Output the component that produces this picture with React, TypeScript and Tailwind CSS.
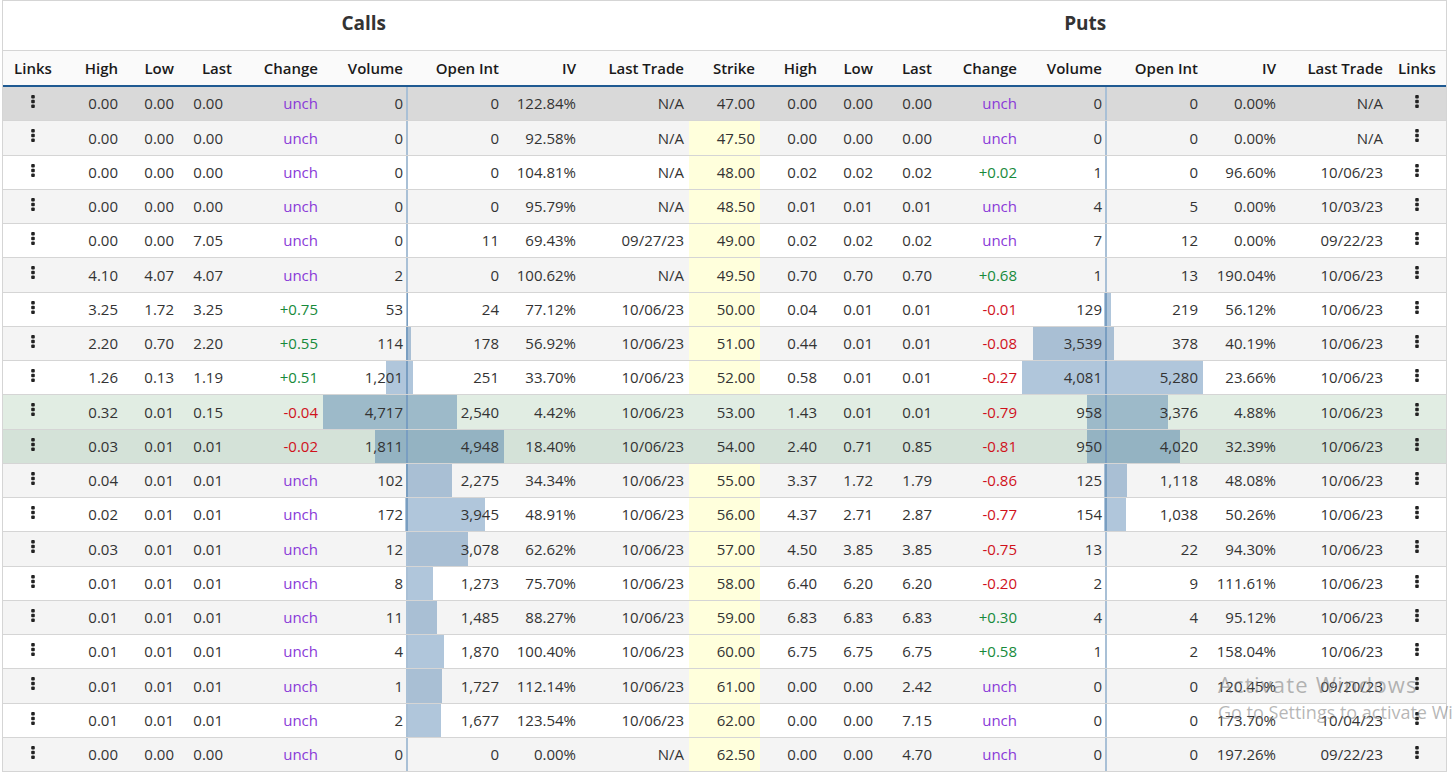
import React from "react";

type Side = [string, string, string, string, number, number, string, string];
type Row = { strike: string; c: Side; p: Side };

const rows: Row[] = [
  { strike: "47.00", c: ["0.00", "0.00", "0.00", "unch", 0, 0, "122.84%", "N/A"], p: ["0.00", "0.00", "0.00", "unch", 0, 0, "0.00%", "N/A"] },
  { strike: "47.50", c: ["0.00", "0.00", "0.00", "unch", 0, 0, "92.58%", "N/A"], p: ["0.00", "0.00", "0.00", "unch", 0, 0, "0.00%", "N/A"] },
  { strike: "48.00", c: ["0.00", "0.00", "0.00", "unch", 0, 0, "104.81%", "N/A"], p: ["0.02", "0.02", "0.02", "+0.02", 1, 0, "96.60%", "10/06/23"] },
  { strike: "48.50", c: ["0.00", "0.00", "0.00", "unch", 0, 0, "95.79%", "N/A"], p: ["0.01", "0.01", "0.01", "unch", 4, 5, "0.00%", "10/03/23"] },
  { strike: "49.00", c: ["0.00", "0.00", "7.05", "unch", 0, 11, "69.43%", "09/27/23"], p: ["0.02", "0.02", "0.02", "unch", 7, 12, "0.00%", "09/22/23"] },
  { strike: "49.50", c: ["4.10", "4.07", "4.07", "unch", 2, 0, "100.62%", "N/A"], p: ["0.70", "0.70", "0.70", "+0.68", 1, 13, "190.04%", "10/06/23"] },
  { strike: "50.00", c: ["3.25", "1.72", "3.25", "+0.75", 53, 24, "77.12%", "10/06/23"], p: ["0.04", "0.01", "0.01", "-0.01", 129, 219, "56.12%", "10/06/23"] },
  { strike: "51.00", c: ["2.20", "0.70", "2.20", "+0.55", 114, 178, "56.92%", "10/06/23"], p: ["0.44", "0.01", "0.01", "-0.08", 3539, 378, "40.19%", "10/06/23"] },
  { strike: "52.00", c: ["1.26", "0.13", "1.19", "+0.51", 1201, 251, "33.70%", "10/06/23"], p: ["0.58", "0.01", "0.01", "-0.27", 4081, 5280, "23.66%", "10/06/23"] },
  { strike: "53.00", c: ["0.32", "0.01", "0.15", "-0.04", 4717, 2540, "4.42%", "10/06/23"], p: ["1.43", "0.01", "0.01", "-0.79", 958, 3376, "4.88%", "10/06/23"] },
  { strike: "54.00", c: ["0.03", "0.01", "0.01", "-0.02", 1811, 4948, "18.40%", "10/06/23"], p: ["2.40", "0.71", "0.85", "-0.81", 950, 4020, "32.39%", "10/06/23"] },
  { strike: "55.00", c: ["0.04", "0.01", "0.01", "unch", 102, 2275, "34.34%", "10/06/23"], p: ["3.37", "1.72", "1.79", "-0.86", 125, 1118, "48.08%", "10/06/23"] },
  { strike: "56.00", c: ["0.02", "0.01", "0.01", "unch", 172, 3945, "48.91%", "10/06/23"], p: ["4.37", "2.71", "2.87", "-0.77", 154, 1038, "50.26%", "10/06/23"] },
  { strike: "57.00", c: ["0.03", "0.01", "0.01", "unch", 12, 3078, "62.62%", "10/06/23"], p: ["4.50", "3.85", "3.85", "-0.75", 13, 22, "94.30%", "10/06/23"] },
  { strike: "58.00", c: ["0.01", "0.01", "0.01", "unch", 8, 1273, "75.70%", "10/06/23"], p: ["6.40", "6.20", "6.20", "-0.20", 2, 9, "111.61%", "10/06/23"] },
  { strike: "59.00", c: ["0.01", "0.01", "0.01", "unch", 11, 1485, "88.27%", "10/06/23"], p: ["6.83", "6.83", "6.83", "+0.30", 4, 4, "95.12%", "10/06/23"] },
  { strike: "60.00", c: ["0.01", "0.01", "0.01", "unch", 4, 1870, "100.40%", "10/06/23"], p: ["6.75", "6.75", "6.75", "+0.58", 1, 2, "158.04%", "10/06/23"] },
  { strike: "61.00", c: ["0.01", "0.01", "0.01", "unch", 1, 1727, "112.14%", "10/06/23"], p: ["0.00", "0.00", "2.42", "unch", 0, 0, "120.45%", "09/20/23"] },
  { strike: "62.00", c: ["0.01", "0.01", "0.01", "unch", 2, 1677, "123.54%", "10/06/23"], p: ["0.00", "0.00", "7.15", "unch", 0, 0, "173.70%", "10/04/23"] },
  { strike: "62.50", c: ["0.00", "0.00", "0.00", "unch", 0, 0, "0.00%", "N/A"], p: ["0.00", "0.00", "4.70", "unch", 0, 0, "197.26%", "09/22/23"] },
];

const GRID =
  "grid grid-cols-[60px_60px_56px_58px_86px_85px_96px_77px_108px_71px_62px_56px_59px_85px_85px_96px_78px_107px_58px]";

const MAX = { cv: 4717, co: 4948, pv: 4081, po: 5280 };

const fmt = (n: number) => n.toLocaleString("en-US");

function changeClass(v: string) {
  if (v === "unch") return "text-[#8a3ad8]";
  if (v.startsWith("+")) return "text-[#178a3b]";
  return "text-[#d0111b]";
}

function Dots() {
  return (
    <svg width="4" height="13" viewBox="0 0 4 13" className="-mt-[4px]">
      <rect x="0.2" y="0" width="3.6" height="3.6" rx="1" fill="#222" />
      <rect x="0.2" y="4.7" width="3.6" height="3.6" rx="1" fill="#222" />
      <rect x="0.2" y="9.4" width="3.6" height="3.6" rx="1" fill="#222" />
    </svg>
  );
}

const cell = "flex items-center justify-end pr-[5px] whitespace-nowrap";

function rowBg(i: number) {
  if (i === 0) return "bg-[#d9d9d9]";
  if (i === 9) return "bg-[#e1ede3]";
  if (i === 10) return "bg-[#d4e2d8]";
  return i % 2 === 1 ? "bg-[#f4f4f4]" : "bg-white";
}

function VolCell({ v, max }: { v: number; max: number }) {
  const w = Math.round((v / max) * 85);
  return (
    <div className={`${cell} relative pr-[5px]`}>
      <div className="absolute top-0 bottom-0 right-0 w-[2px] bg-[#a9c0d6]" />
      {w > 0 && (
        <div className="absolute top-0 bottom-0 right-0 bg-[rgba(36,97,155,0.36)]" style={{ width: w }} />
      )}
      <span className="relative">{fmt(v)}</span>
    </div>
  );
}

function OiCell({ v, max }: { v: number; max: number }) {
  const w = Math.round((v / max) * 96);
  return (
    <div className={`${cell} relative`}>
      {w > 0 && (
        <div className="absolute top-0 bottom-0 left-0 bg-[rgba(36,97,155,0.36)]" style={{ width: w }} />
      )}
      <span className="relative">{fmt(v)}</span>
    </div>
  );
}

const callHeaders = ["High", "Low", "Last", "Change", "Volume", "Open Int", "IV", "Last Trade"];

export default function App() {
  return (
    <div
      className="relative w-[1452px] h-[773px] overflow-hidden bg-white text-[15px] text-[#333]"
      style={{ fontFamily: '"Open Sans", "Noto Sans", sans-serif' }}
    >
      <div className="ml-[2px] w-[1445px] border border-b-0 border-[#d5d5d5]">
        {/* Title row */}
        <div className="flex h-[50px] border-b border-[#d5d5d5] bg-white">
          <div className="w-[721.5px] flex items-center justify-center pb-[4px] text-[19px] font-bold text-[#333]">
            Calls
          </div>
          <div className="flex-1 flex items-center justify-center pb-[4px] text-[19px] font-bold text-[#333]">
            Puts
          </div>
        </div>
        {/* Column header row */}
        <div className={`${GRID} h-[36px] pt-[1px] bg-[#fafafa] border-b-2 border-[#1f5a92] font-semibold text-[#1a1a1a]`}>
          <div className="flex items-center justify-center">Links</div>
          {callHeaders.map((h) => (
            <div key={"c" + h} className={cell}>
              {h}
            </div>
          ))}
          <div className={cell}>Strike</div>
          {callHeaders.map((h) => (
            <div key={"p" + h} className={cell}>
              {h}
            </div>
          ))}
          <div className="flex items-center justify-center">Links</div>
        </div>
        {/* Body */}
        {rows.map((r, i) => {
          const yellow = i !== 0 && i !== 9 && i !== 10;
          return (
            <div key={r.strike} className={`${GRID} h-[34.25px] border-b border-[#d5d5d5] ${rowBg(i)}`}>
              <div className="flex items-center justify-center">
                <Dots />
              </div>
              <div className={cell}>{r.c[0]}</div>
              <div className={cell}>{r.c[1]}</div>
              <div className={`${cell} pr-[14px]`}>{r.c[2]}</div>
              <div className={`${cell} ${changeClass(r.c[3])}`}>{r.c[3]}</div>
              <VolCell v={r.c[4]} max={MAX.cv} />
              <OiCell v={r.c[5]} max={MAX.co} />
              <div className={cell}>{r.c[6]}</div>
              <div className={cell}>{r.c[7]}</div>
              <div className={`${cell} ${yellow ? "bg-[#ffffdc]" : ""}`}>{r.strike}</div>
              <div className={cell}>{r.p[0]}</div>
              <div className={cell}>{r.p[1]}</div>
              <div className={cell}>{r.p[2]}</div>
              <div className={`${cell} ${changeClass(r.p[3])}`}>{r.p[3]}</div>
              <VolCell v={r.p[4]} max={MAX.pv} />
              <OiCell v={r.p[5]} max={MAX.po} />
              <div className={cell}>{r.p[6]}</div>
              <div className={cell}>{r.p[7]}</div>
              <div className="flex items-center justify-center">
                <Dots />
              </div>
            </div>
          );
        })}
      </div>
      {/* Windows activation watermark */}
      <div className="pointer-events-none absolute left-[1218px] top-[670px] whitespace-nowrap text-[rgba(110,110,110,0.5)]">
        <div className="text-[22px] leading-[28px] tracking-[1.2px]">Activate Windows</div>
        <div className="text-[18px] leading-[22px] mt-[3px]">Go to Settings to activate Windows.</div>
      </div>
    </div>
  );
}
